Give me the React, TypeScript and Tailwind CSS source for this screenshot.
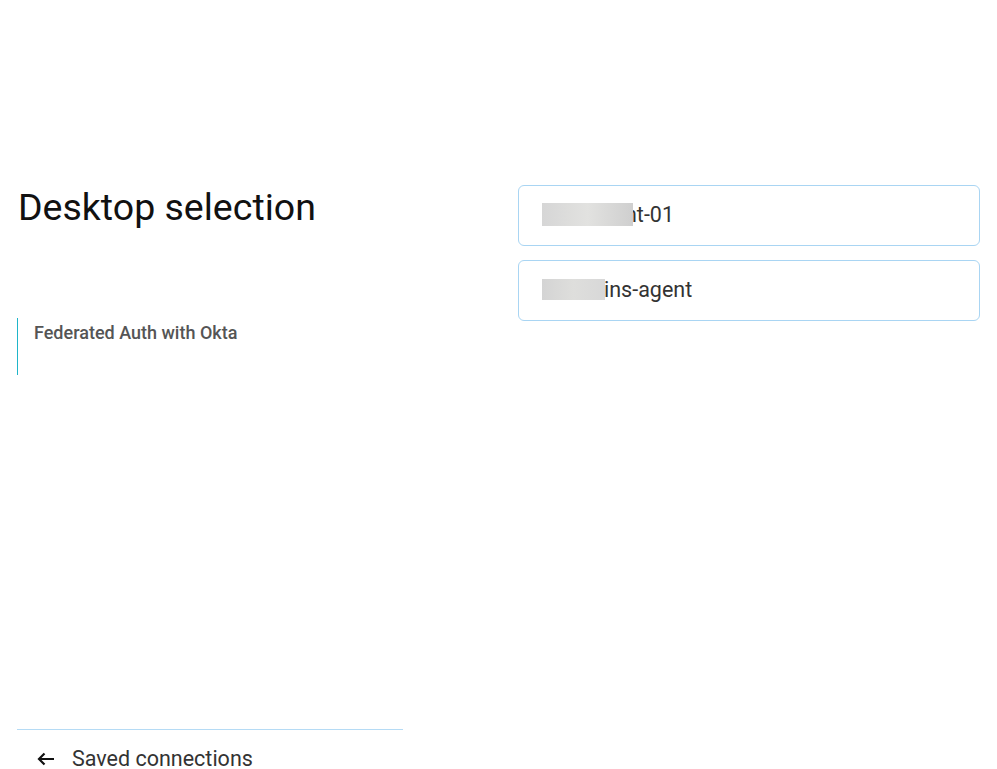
export default function App() {
  const font = { fontFamily: 'Roboto, "Liberation Sans", sans-serif' };

  return (
    <div className="h-[769px] w-[997px] overflow-hidden bg-white" style={font}>
      <div className="flex h-full px-[17px] pt-[185px]">
        {/* left column */}
        <div className="flex w-[386px] flex-col">
          <h1 className="pl-px text-[37.5px] leading-[44px] text-[#111]">Desktop selection</h1>

          <div className="mt-[89px] flex h-[57px]">
            <div className="w-px bg-[#1fb5c9]" />
            <p className="pl-[16px] pt-[4px] text-[18px] font-medium leading-[22px] text-[#555]">Federated Auth with Okta</p>
          </div>

          <div className="mt-auto h-[40px]">
            <div className="h-px bg-[#b5dbf5]" />
            <div className="flex items-center gap-[17px] pl-[20px] pt-[15px]">
              <svg width="18" height="14" viewBox="0 0 18 14" fill="none" stroke="#111" strokeWidth="2.2">
                <path d="M17 7H2M7.5 1.5 2 7l5.5 5.5" />
              </svg>
              <span className="text-[21.5px] leading-[28px] text-[#333]">Saved connections</span>
            </div>
          </div>
        </div>

        {/* right column */}
        <div className="ml-[115px] flex flex-1 flex-col gap-[14px]">
          <div className="relative flex h-[61px] items-center rounded-[6px] border border-[#a9d5f3] px-[23px]">
            <span className="ml-[83px] text-[21.5px] text-[#333]">nt-01</span>
            <span className="absolute left-[23px] top-[17px] h-[23px] w-[91px] bg-gradient-to-r from-[#d6d6d6] via-[#e2e2e0] to-[#cfcfcf]" />
          </div>
          <div className="relative flex h-[61px] items-center rounded-[6px] border border-[#a9d5f3] px-[23px]">
            <span className="ml-[62px] text-[21.5px] text-[#333]">ins-agent</span>
            <span className="absolute left-[23px] top-[18px] h-[21px] w-[63px] bg-gradient-to-r from-[#d4d4d4] via-[#dededc] to-[#d8d8d8]" />
          </div>
        </div>
      </div>
    </div>
  );
}
